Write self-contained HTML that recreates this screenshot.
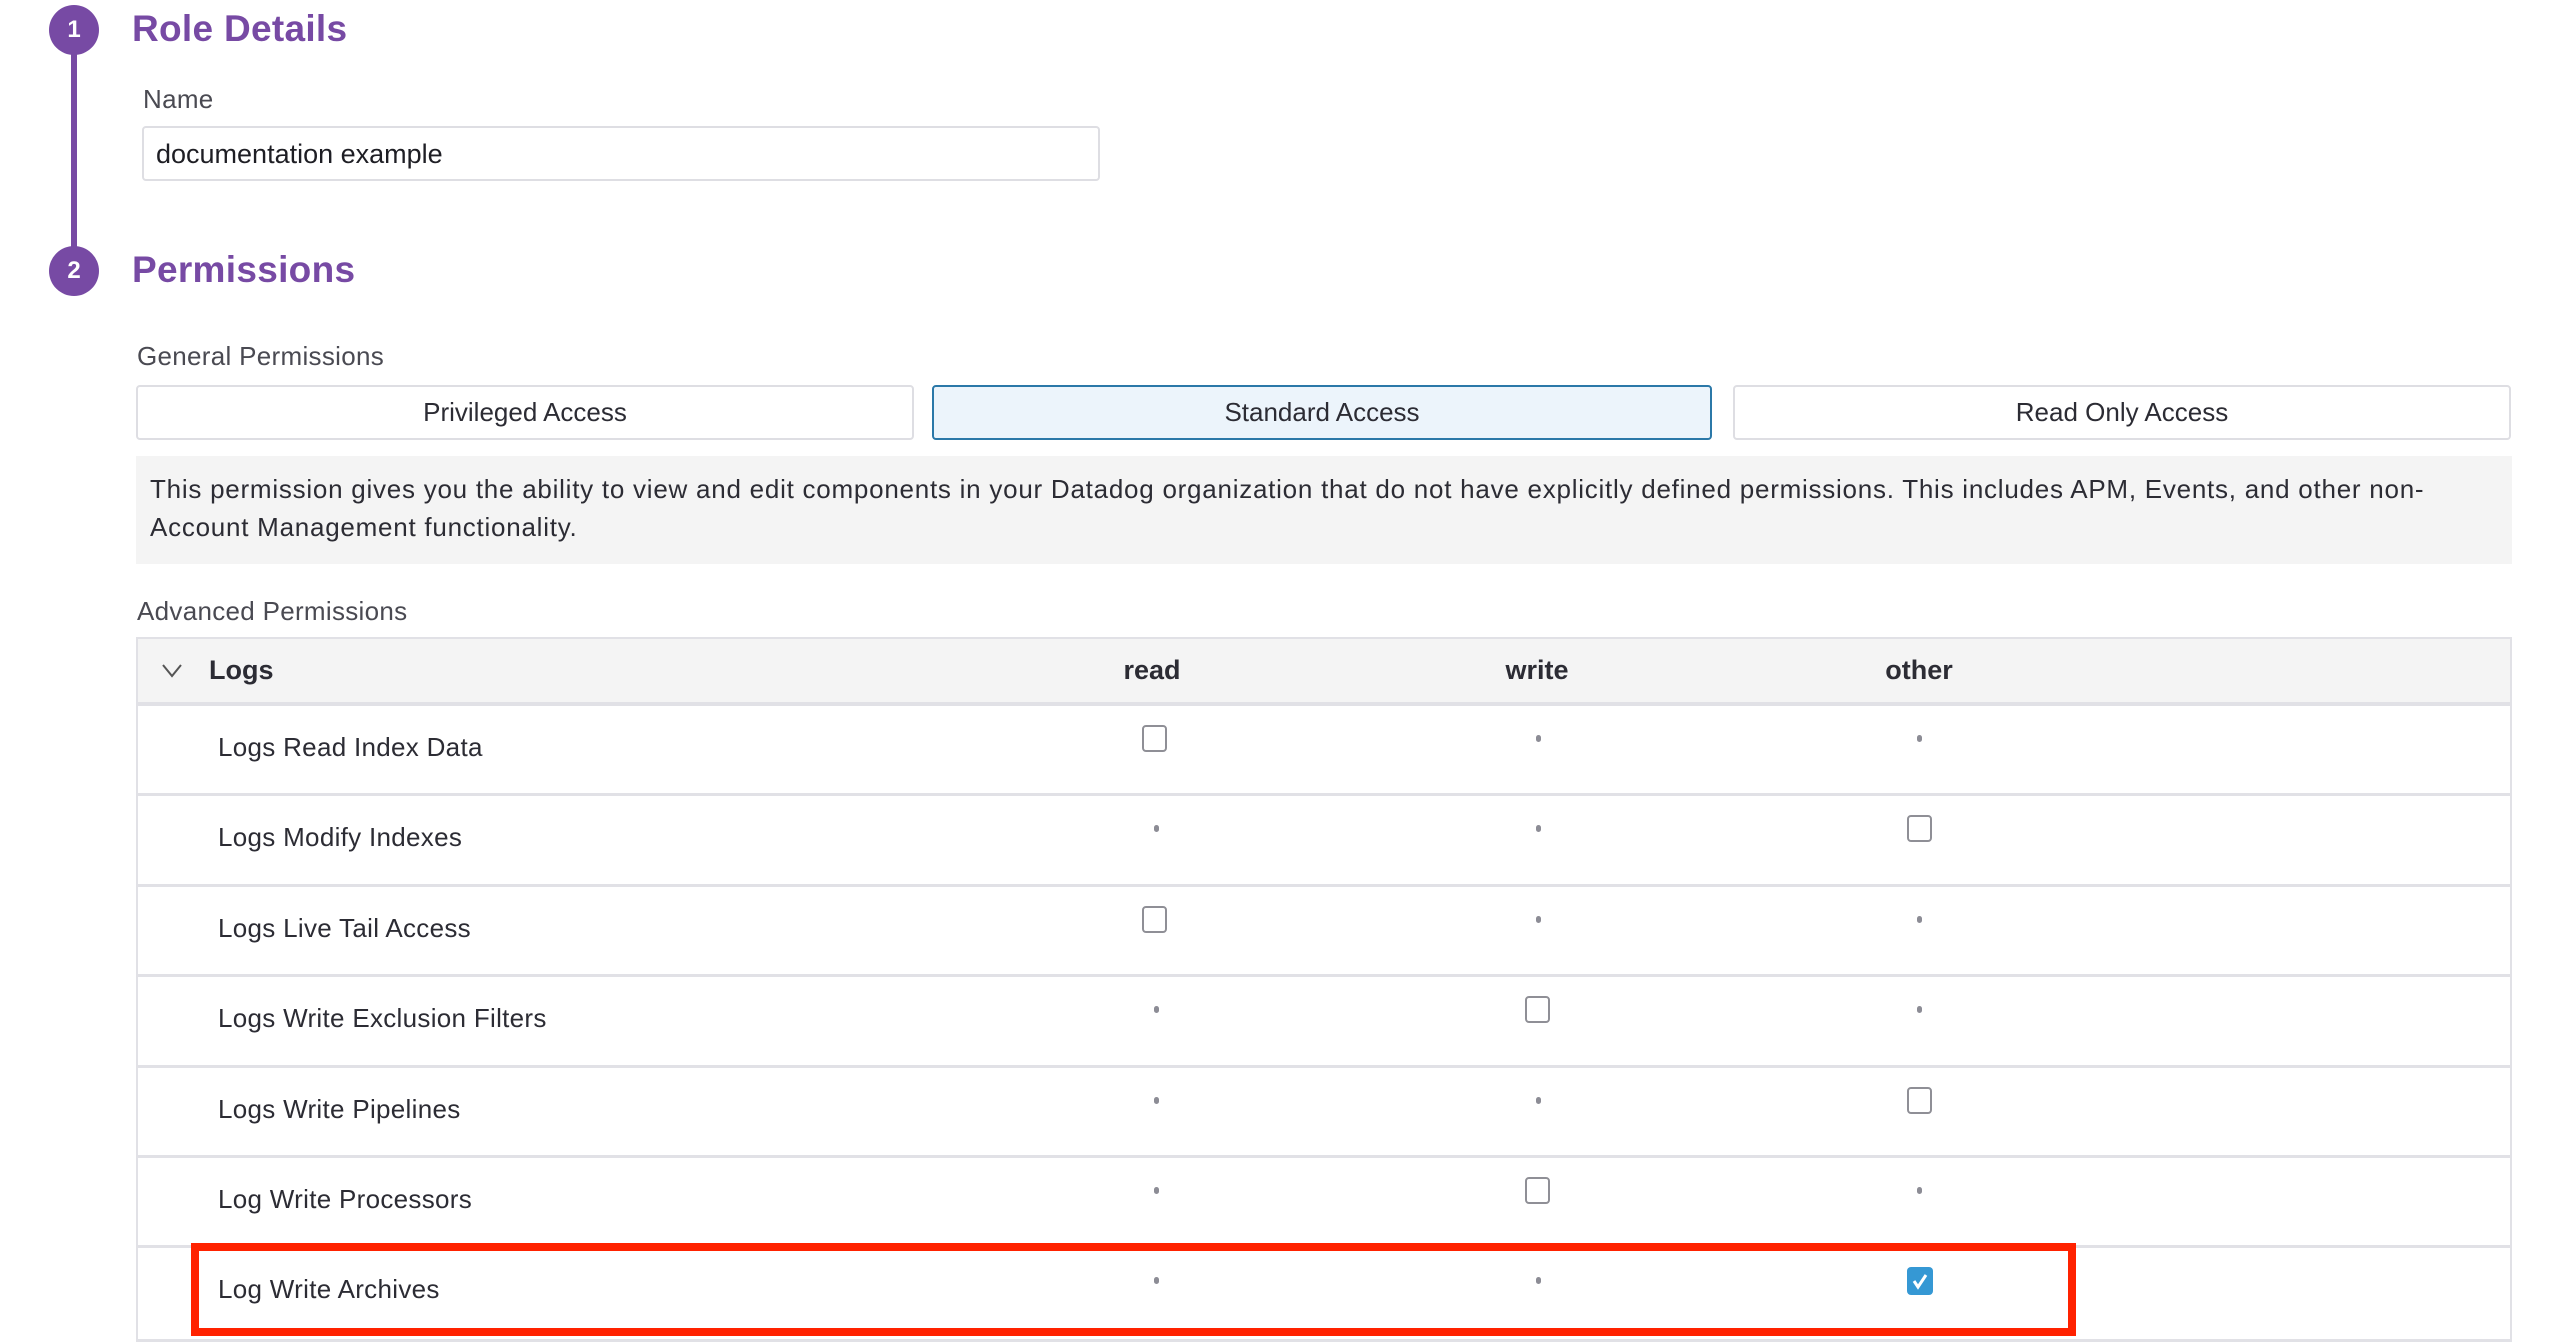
<!DOCTYPE html>
<html><head><meta charset="utf-8"><style>
*{margin:0;padding:0;box-sizing:border-box}
body{width:2560px;height:1342px;overflow:hidden;background:#fff;font-family:"Liberation Sans",sans-serif;color:#2c2c34;position:relative}
.a{position:absolute}
.circ{position:absolute;left:49px;width:50px;height:50px;border-radius:50%;background:#774aa4;color:#fff;font-weight:bold;font-size:24px;text-align:center;line-height:50px}
.h{position:absolute;left:132px;color:#774aa4;font-weight:bold;font-size:37px;letter-spacing:0.3px}
.lbl{position:absolute;font-size:26px;color:#4a4a52;letter-spacing:0.3px}
.btn{position:absolute;top:385px;height:55px;border:2px solid #dedee3;border-radius:4px;background:#fff;font-size:26px;text-align:center;line-height:51px}
.row{position:absolute;left:136px;width:2376px;height:91px;border-top:3px solid #e1e1e6;border-left:2px solid #e1e1e6;border-right:2px solid #e1e1e6}
.row .t{position:absolute;left:80px;top:26px;font-size:26px;color:#2c2c34;letter-spacing:0.3px}
.cb{position:absolute;width:25px;height:27px;border:2px solid #8f8f96;border-radius:4px;top:19px}
.dot{position:absolute;width:5px;height:7px;border-radius:3px;background:#8c8c95;top:29px}
</style></head><body>
<div class="a" style="left:71px;top:30px;width:6px;height:240px;background:#774aa4"></div>
<div class="circ" style="top:5px">1</div>
<div class="circ" style="top:246px">2</div>
<div class="h" style="top:8px">Role Details</div>
<div class="h" style="top:249px">Permissions</div>
<div class="lbl" style="left:143px;top:84px">Name</div>
<div class="a" style="left:142px;top:126px;width:958px;height:55px;border:2px solid #dedee3;border-radius:4px;font-size:27px;padding:11px 12px;color:#1e1e24">documentation example</div>
<div class="lbl" style="left:137px;top:341px">General Permissions</div>
<div class="btn" style="left:136px;width:778px">Privileged Access</div>
<div class="btn" style="left:932px;width:780px;background:#ecf4fb;border-color:#2b78a8">Standard Access</div>
<div class="btn" style="left:1733px;width:778px">Read Only Access</div>
<div class="a" style="left:136px;top:456px;width:2376px;height:108px;background:#f4f4f4;padding:14px 14px;font-size:26px;line-height:38px;color:#2c2c34;letter-spacing:0.75px;white-space:nowrap">This permission gives you the ability to view and edit components in your Datadog organization that do not have explicitly defined permissions. This includes APM, Events, and other non-<br>Account Management functionality.</div>
<div class="lbl" style="left:137px;top:596px">Advanced Permissions</div>
<div class="a" style="left:136px;top:637px;width:2376px;height:68px;background:#f4f4f4;border:2px solid #e1e1e6;border-bottom:3px solid #e1e1e6">
 <svg class="a" style="left:24px;top:24px" width="20" height="16" viewBox="0 0 20 16"><path d="M1 2 L10 13 L19 2" fill="none" stroke="#555" stroke-width="2"/></svg>
 <div class="a" style="left:71px;top:16px;font-size:27px;font-weight:bold">Logs</div>
 <div class="a" style="left:979px;top:16px;font-size:27px;font-weight:bold;width:70px;text-align:center">read</div>
 <div class="a" style="left:1359px;top:16px;font-size:27px;font-weight:bold;width:80px;text-align:center">write</div>
 <div class="a" style="left:1736px;top:16px;font-size:27px;font-weight:bold;width:90px;text-align:center">other</div>
</div>
<div class="row" style="top:703px"><div class="t">Logs Read Index Data</div><div class="cb" style="left:1004px"></div><div class="dot" style="left:1398px"></div><div class="dot" style="left:1779px"></div></div>
<div class="row" style="top:793px"><div class="t">Logs Modify Indexes</div><div class="dot" style="left:1016px"></div><div class="dot" style="left:1398px"></div><div class="cb" style="left:1769px"></div></div>
<div class="row" style="top:884px"><div class="t">Logs Live Tail Access</div><div class="cb" style="left:1004px"></div><div class="dot" style="left:1398px"></div><div class="dot" style="left:1779px"></div></div>
<div class="row" style="top:974px"><div class="t">Logs Write Exclusion Filters</div><div class="dot" style="left:1016px"></div><div class="cb" style="left:1387px"></div><div class="dot" style="left:1779px"></div></div>
<div class="row" style="top:1065px"><div class="t">Logs Write Pipelines</div><div class="dot" style="left:1016px"></div><div class="dot" style="left:1398px"></div><div class="cb" style="left:1769px"></div></div>
<div class="row" style="top:1155px"><div class="t">Log Write Processors</div><div class="dot" style="left:1016px"></div><div class="cb" style="left:1387px"></div><div class="dot" style="left:1779px"></div></div>
<div class="row" style="top:1245px;height:97px;border-bottom:3px solid #e1e1e6"><div class="t">Log Write Archives</div><div class="dot" style="left:1016px"></div><div class="dot" style="left:1398px"></div>
 <div class="a" style="left:1769px;top:19px;width:26px;height:28px;border-radius:4px;background:#3598d4"><svg width="26" height="28" viewBox="0 0 26 28"><path d="M7 14 L11 20 L19 8" fill="none" stroke="#fff" stroke-width="3"/></svg></div>
</div>
<div class="a" style="left:191px;top:1243px;width:1885px;height:93px;border:8px solid #ff2200"></div>
</body></html>
